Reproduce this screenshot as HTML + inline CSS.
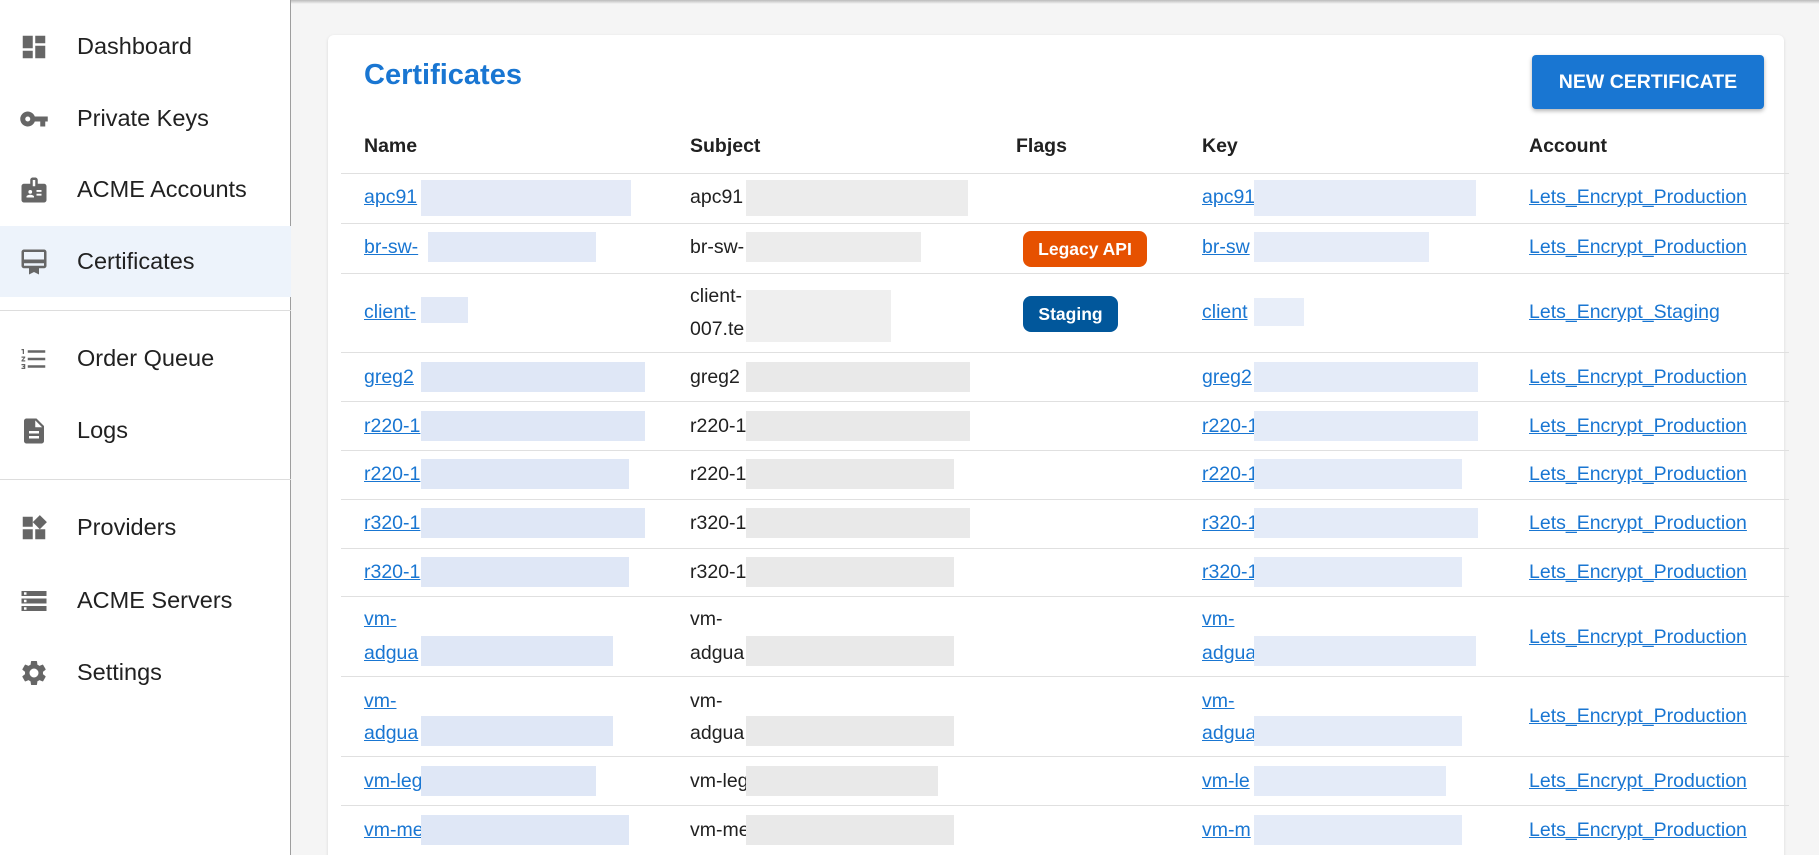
<!DOCTYPE html>
<html><head><meta charset="utf-8"><style>
*{box-sizing:border-box;margin:0;padding:0}
html{width:1819px;height:855px;overflow:hidden}
body{width:1819px;height:855px;overflow:hidden;background:#f5f5f5;font-family:"Liberation Sans",sans-serif;position:relative;color:#212121}
.top{position:absolute;left:0;top:0;width:1819px;height:4px;background:linear-gradient(#bbb,#f5f5f5)}
.side{position:absolute;left:0;top:0;width:291px;height:855px;background:#fff;border-right:1px solid #9e9e9e}
.nav{position:absolute;left:0;width:291px;height:71px;display:flex;align-items:center}
.nav svg{position:absolute;left:19px;width:30px;height:30px;fill:#666}
.nav span{position:absolute;left:77px;font-size:23.5px;color:#212121}
.act{background:#edf3fb}
.div{position:absolute;left:0;width:291px;height:1px;background:#ddd}
.card{position:absolute;left:328px;top:35px;width:1456px;height:830px;background:#fff;border-radius:6px;box-shadow:0 1px 3px rgba(0,0,0,.12)}
.title{position:absolute;left:364px;top:59px;font-size:29px;font-weight:bold;color:#1976d2}
.btn{position:absolute;left:1532px;top:55px;width:232px;height:54px;background:#1976d2;border-radius:4px;color:#fff;font-size:19.5px;font-weight:bold;display:flex;align-items:center;justify-content:center;box-shadow:0 2px 4px rgba(0,0,0,.3)}
.th{position:absolute;top:135px;font-size:19.5px;font-weight:bold;color:#212121}
.ln{position:absolute;left:341px;width:1448px;height:1px;background:#e0e0e0}
.t{position:absolute;font-size:19.5px;line-height:22px;white-space:nowrap}
.a{color:#1976d2;text-decoration:underline}
.b{position:absolute}
.badge{position:absolute;left:1023px;color:#fff;font-size:17.5px;font-weight:bold;border-radius:8px;display:flex;align-items:center;justify-content:center}
</style></head><body>
<div class="top"></div>
<div class="side">
<div class="nav" style="top:11px"><svg viewBox="0 0 24 24"><path d="M3 13h8V3H3zm0 8h8v-6H3zm10 0h8V11h-8zm0-18v6h8V3z"/></svg><span>Dashboard</span></div>
<div class="nav" style="top:83px"><svg viewBox="0 0 24 24"><path d="M12.65 10A6 6 0 1 0 12.65 14H17v4h4v-4h2v-4zM7 14a2 2 0 1 1 0-4 2 2 0 0 1 0 4z"/></svg><span>Private Keys</span></div>
<div class="nav" style="top:154px"><svg viewBox="0 0 24 24"><path d="M20 7h-5V4c0-1.1-.9-2-2-2h-2c-1.1 0-2 .9-2 2v3H4c-1.1 0-2 .9-2 2v11c0 1.1.9 2 2 2h16c1.1 0 2-.9 2-2V9c0-1.1-.9-2-2-2zM9 12a1.5 1.5 0 1 1 0 3 1.5 1.5 0 0 1 0-3zm3 6H6v-.75c0-1 2-1.5 3-1.5s3 .5 3 1.5zm1-9h-2V4h2zm5 7.5h-4V15h4zm0-3h-4V12h4z"/></svg><span>ACME Accounts</span></div>
<div class="nav act" style="top:226px"><svg viewBox="0 0 24 24"><path d="M20 2H4c-1.1 0-2 .9-2 2v11c0 1.1.9 2 2 2h4v5l4-2 4 2v-5h4c1.1 0 2-.9 2-2V4c0-1.1-.9-2-2-2zm0 13H4v-2h16zm0-5H4V4h16z"/></svg><span>Certificates</span></div>
<div class="div" style="top:310px"></div>
<div class="nav" style="top:323px"><svg viewBox="0 0 24 24"><path d="M2 17h2v.5H3v1h1v.5H2v1h3v-4H2zm1-9h1V4H2v1h1zm-1 3h1.8L2 13.1v.9h3v-1H3.2L5 10.9V10H2zm5-6v2h14V5zm0 14h14v-2H7zm0-6h14v-2H7z"/></svg><span>Order Queue</span></div>
<div class="nav" style="top:395px"><svg viewBox="0 0 24 24"><path d="M14 2H6c-1.1 0-2 .9-2 2v16c0 1.1.9 2 2 2h12c1.1 0 2-.9 2-2V8zm2 16H8v-2h8zm0-4H8v-2h8zm-3-5V3.5L18.5 9z"/></svg><span>Logs</span></div>
<div class="div" style="top:479px"></div>
<div class="nav" style="top:492px"><svg viewBox="0 0 24 24"><path d="M13 13v8h8v-8zM3 21h8v-8H3zM3 3v8h8V3zm13.66-1.31L11 7.34 16.66 13l5.66-5.66z"/></svg><span>Providers</span></div>
<div class="nav" style="top:565px"><svg viewBox="0 0 24 24"><path d="M2 20h20v-4H2zm2-3h2v2H4zM2 4v4h20V4zm4 3H4V5h2zm-4 7h20v-4H2zm2-3h2v2H4z"/></svg><span>ACME Servers</span></div>
<div class="nav" style="top:637px"><svg viewBox="0 0 24 24"><path d="M19.14 12.94c.04-.3.06-.61.06-.94 0-.32-.02-.64-.07-.94l2.030-1.58a.49.49 0 0 0 .12-.61l-1.92-3.32a.49.49 0 0 0-.59-.22l-2.39.96c-.5-.38-1.03-.7-1.62-.94l-.36-2.54a.48.48 0 0 0-.48-.41h-3.84c-.24 0-.43.17-.47.41l-.36 2.54c-.59.24-1.130.57-1.62.94l-2.39-.96a.48.48 0 0 0-.59.22L2.74 8.87c-.12.21-.08.47.12.61l2.03 1.58c-.05.3-.09.63-.09.94s.02.64.07.94l-2.03 1.58a.49.49 0 0 0-.12.61l1.92 3.32c.12.22.37.29.59.22l2.39-.96c.5.38 1.03.7 1.62.94l.36 2.54c.05.24.24.41.48.41h3.84c.24 0 .44-.17.47-.41l.36-2.54c.59-.24 1.13-.56 1.62-.94l2.39.96c.22.08.47 0 .59-.22l1.92-3.32c.12-.22.07-.47-.12-.61zM12 15.6A3.6 3.6 0 1 1 12 8.4a3.6 3.6 0 0 1 0 7.2z"/></svg><span>Settings</span></div>
</div>
<div class="card"></div>
<div class="title">Certificates</div>
<div class="btn">NEW CERTIFICATE</div>
<div class="th" style="left:364px">Name</div>
<div class="th" style="left:690px">Subject</div>
<div class="th" style="left:1016px">Flags</div>
<div class="th" style="left:1202px">Key</div>
<div class="th" style="left:1529px">Account</div>
<div class="ln" style="top:173px"></div><div class="ln" style="top:223px"></div><div class="ln" style="top:273px"></div><div class="ln" style="top:352px"></div><div class="ln" style="top:401px"></div><div class="ln" style="top:450px"></div><div class="ln" style="top:499px"></div><div class="ln" style="top:548px"></div><div class="ln" style="top:596px"></div><div class="ln" style="top:676px"></div><div class="ln" style="top:756px"></div><div class="ln" style="top:805px"></div>

<div class="t a" style="left:364px;top:186px">apc91</div><div class="t" style="left:690px;top:186px">apc91</div><div class="t a" style="left:1202px;top:186px">apc91</div><div class="t a" style="left:1529px;top:186px">Lets_Encrypt_Production</div>
<div class="b" style="left:421px;top:180px;width:210px;height:36px;background:#e4eaf7"></div><div class="b" style="left:746px;top:180px;width:222px;height:36px;background:#ececec"></div><div class="b" style="left:1254px;top:180px;width:222px;height:36px;background:#e6ecf8"></div>
<div class="t a" style="left:364px;top:236px">br-sw-</div><div class="t" style="left:690px;top:236px">br-sw-</div><div class="t a" style="left:1202px;top:236px">br-sw</div><div class="t a" style="left:1529px;top:236px">Lets_Encrypt_Production</div>
<div class="b" style="left:428px;top:232px;width:168px;height:30px;background:#e2e9f7"></div><div class="b" style="left:746px;top:232px;width:175px;height:30px;background:#ececec"></div><div class="b" style="left:1254px;top:232px;width:175px;height:30px;background:#e6ecf8"></div>
<div class="badge" style="top:231px;width:124px;height:36px;background:#e65100">Legacy API</div>
<div class="t a" style="left:364px;top:301px">client-</div><div class="t" style="left:690px;top:285px">client-</div><div class="t" style="left:690px;top:318px">007.te</div><div class="t a" style="left:1202px;top:301px">client</div><div class="t a" style="left:1529px;top:301px">Lets_Encrypt_Staging</div>
<div class="b" style="left:421px;top:297px;width:47px;height:26px;background:#e2e9f7"></div><div class="b" style="left:746px;top:290px;width:145px;height:52px;background:#efefef"></div><div class="b" style="left:1254px;top:298px;width:50px;height:28px;background:#e8eef9"></div>
<div class="badge" style="top:296px;width:95px;height:36px;background:#01579b">Staging</div>
<div class="t a" style="left:364px;top:366px">greg2</div><div class="t" style="left:690px;top:366px">greg2</div><div class="t a" style="left:1202px;top:366px">greg2</div><div class="t a" style="left:1529px;top:366px">Lets_Encrypt_Production</div>
<div class="b" style="left:421px;top:362px;width:224px;height:30px;background:#dfe7f6"></div><div class="b" style="left:746px;top:362px;width:224px;height:30px;background:#e9e9e9"></div><div class="b" style="left:1254px;top:362px;width:224px;height:30px;background:#e4ebf8"></div>
<div class="t a" style="left:364px;top:415px">r220-1</div><div class="t" style="left:690px;top:415px">r220-1</div><div class="t a" style="left:1202px;top:415px">r220-1</div><div class="t a" style="left:1529px;top:415px">Lets_Encrypt_Production</div>
<div class="b" style="left:421px;top:411px;width:224px;height:30px;background:#dfe7f6"></div><div class="b" style="left:746px;top:411px;width:224px;height:30px;background:#e9e9e9"></div><div class="b" style="left:1254px;top:411px;width:224px;height:30px;background:#e4ebf8"></div>
<div class="t a" style="left:364px;top:463px">r220-1</div><div class="t" style="left:690px;top:463px">r220-1</div><div class="t a" style="left:1202px;top:463px">r220-1</div><div class="t a" style="left:1529px;top:463px">Lets_Encrypt_Production</div>
<div class="b" style="left:421px;top:459px;width:208px;height:30px;background:#dfe7f6"></div><div class="b" style="left:746px;top:459px;width:208px;height:30px;background:#e9e9e9"></div><div class="b" style="left:1254px;top:459px;width:208px;height:30px;background:#e4ebf8"></div>
<div class="t a" style="left:364px;top:512px">r320-1</div><div class="t" style="left:690px;top:512px">r320-1</div><div class="t a" style="left:1202px;top:512px">r320-1</div><div class="t a" style="left:1529px;top:512px">Lets_Encrypt_Production</div>
<div class="b" style="left:421px;top:508px;width:224px;height:30px;background:#dfe7f6"></div><div class="b" style="left:746px;top:508px;width:224px;height:30px;background:#e9e9e9"></div><div class="b" style="left:1254px;top:508px;width:224px;height:30px;background:#e4ebf8"></div>
<div class="t a" style="left:364px;top:561px">r320-1</div><div class="t" style="left:690px;top:561px">r320-1</div><div class="t a" style="left:1202px;top:561px">r320-1</div><div class="t a" style="left:1529px;top:561px">Lets_Encrypt_Production</div>
<div class="b" style="left:421px;top:557px;width:208px;height:30px;background:#dfe7f6"></div><div class="b" style="left:746px;top:557px;width:208px;height:30px;background:#e9e9e9"></div><div class="b" style="left:1254px;top:557px;width:208px;height:30px;background:#e4ebf8"></div>
<div class="t a" style="left:364px;top:608px">vm-</div><div class="t a" style="left:364px;top:642px">adgua</div><div class="t" style="left:690px;top:608px">vm-</div><div class="t" style="left:690px;top:642px">adgua</div><div class="t a" style="left:1202px;top:608px">vm-</div><div class="t a" style="left:1202px;top:642px">adgua</div><div class="t a" style="left:1529px;top:626px">Lets_Encrypt_Production</div>
<div class="b" style="left:421px;top:636px;width:192px;height:30px;background:#dfe7f6"></div><div class="b" style="left:746px;top:636px;width:208px;height:30px;background:#e9e9e9"></div><div class="b" style="left:1254px;top:636px;width:222px;height:30px;background:#e4ebf8"></div>
<div class="t a" style="left:364px;top:690px">vm-</div><div class="t a" style="left:364px;top:722px">adgua</div><div class="t" style="left:690px;top:690px">vm-</div><div class="t" style="left:690px;top:722px">adgua</div><div class="t a" style="left:1202px;top:690px">vm-</div><div class="t a" style="left:1202px;top:722px">adgua</div><div class="t a" style="left:1529px;top:705px">Lets_Encrypt_Production</div>
<div class="b" style="left:421px;top:716px;width:192px;height:30px;background:#dfe7f6"></div><div class="b" style="left:746px;top:716px;width:208px;height:30px;background:#e9e9e9"></div><div class="b" style="left:1254px;top:716px;width:208px;height:30px;background:#e4ebf8"></div>
<div class="t a" style="left:364px;top:770px">vm-leg</div><div class="t" style="left:690px;top:770px">vm-leg</div><div class="t a" style="left:1202px;top:770px">vm-le</div><div class="t a" style="left:1529px;top:770px">Lets_Encrypt_Production</div>
<div class="b" style="left:421px;top:766px;width:175px;height:30px;background:#dfe7f6"></div><div class="b" style="left:746px;top:766px;width:192px;height:30px;background:#e9e9e9"></div><div class="b" style="left:1254px;top:766px;width:192px;height:30px;background:#e4ebf8"></div>
<div class="t a" style="left:364px;top:819px">vm-me</div><div class="t" style="left:690px;top:819px">vm-me</div><div class="t a" style="left:1202px;top:819px">vm-m</div><div class="t a" style="left:1529px;top:819px">Lets_Encrypt_Production</div>
<div class="b" style="left:421px;top:815px;width:208px;height:30px;background:#dfe7f6"></div><div class="b" style="left:746px;top:815px;width:208px;height:30px;background:#e9e9e9"></div><div class="b" style="left:1254px;top:815px;width:208px;height:30px;background:#e4ebf8"></div>
</body></html>
